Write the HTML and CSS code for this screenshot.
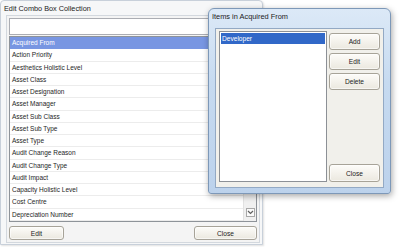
FILE: index.html
```html
<html><head>
	<meta charset="utf-8">
	<title>Edit Combo Box Collection</title>
	<link rel="stylesheet" href="styles.css">
</head>
<body>
	<div class="desktop">
		<!-- main window -->
		<div class="win main-win">
			<div class="title">Edit Combo Box Collection</div>
			<div class="client">
				<div class="textbox"></div>
				<div class="listview">
					<div class="rows">
						<div class="row selected">Acquired From</div>
						<div class="row">Action Priority</div>
						<div class="row">Aesthetics Holistic Level</div>
						<div class="row">Asset Class</div>
						<div class="row">Asset Designation</div>
						<div class="row">Asset Manager</div>
						<div class="row">Asset Sub Class</div>
						<div class="row">Asset Sub Type</div>
						<div class="row">Asset Type</div>
						<div class="row">Audit Change Reason</div>
						<div class="row">Audit Change Type</div>
						<div class="row">Audit Impact</div>
						<div class="row">Capacity Holistic Level</div>
						<div class="row">Cost Centre</div>
						<div class="row">Depreciation Number</div>
					</div>
					<div class="vscroll">
						<div class="arrow">
							<svg width="7" height="7" viewBox="0 0 7 7"><path d="M1 2 L3.5 4.5 L6 2" fill="none" stroke="#606060" stroke-width="1.2"/></svg>
						</div>
					</div>
				</div>
				<div class="actions">
					<button class="btn btn-edit">Edit</button>
					<button class="btn btn-close">Close</button>
				</div>
			</div>
		</div>

		<!-- items window -->
		<div class="win items-win">
			<div class="title">Items in Acquired From</div>
			<div class="client">
				<div class="listbox">
					<div class="item selected">Developer</div>
				</div>
				<div class="side">
					<button class="btn">Add</button>
					<button class="btn">Edit</button>
					<button class="btn">Delete</button>
					<button class="btn btn-bottom">Close</button>
				</div>
			</div>
		</div>
	</div>
</body></html>
```

FILE: styles.css
```css
* {
	margin: 0;
	padding: 0;
	box-sizing: border-box;
}

body {
	font-family: "Liberation Sans", Arial, sans-serif;
	color: #1e1e1e;
	background: #fff;
}

.desktop {
	width: 399px;
	height: 247px;
	position: relative;
	overflow: hidden;
}

.win {
	display: flex;
	flex-direction: column;
}

.title {
	flex: none;
	white-space: nowrap;
}

/* main window */
.main-win {
	width: 263px;
	height: 245px;
	border: 1px solid #c8d0da;
	border-radius: 4px 4px 0 0;
	background: #f6f7f8;
	box-shadow: 1px 1px 2px rgba(0,0,0,0.12);
}
.main-win .title {
	height: 14px;
	line-height: 15px;
	padding-left: 3px;
	font-size: 7.3px;
	color: #222;
}
.main-win .client {
	flex: 1;
	margin: 0 2px 1px 5px;
	border: 1px solid #d3d8de;
	background: #f4f4f4;
	padding: 2px 1px 0 1px;
	display: flex;
	flex-direction: column;
}

.textbox {
	height: 17px;
	margin: 0 1px;
	border: 1px solid #abadb3;
	background: #fff;
}

.listview {
	height: 186px;
	margin: 1px 1px 0 1px;
	border: 1px solid #8e9399;
	background: #fff;
	display: flex;
}
.rows {
	flex: 1;
}
.row {
	height: 12.25px;
	line-height: 12px;
	padding-left: 2px;
	font-size: 6.5px;
	border-bottom: 1px solid #ececec;
	white-space: nowrap;
}
.row.selected {
	background: #7896e2;
	color: #fff;
	border-bottom-color: #7896e2;
}

.vscroll {
	width: 13px;
	background: #f0f0f0;
	border-left: 1px solid #e2e2e2;
	display: flex;
	flex-direction: column;
	justify-content: flex-end;
	align-items: center;
	padding-bottom: 4px;
}
.arrow {
	width: 9px;
	height: 9px;
	border: 1px solid #a8a8a8;
	background: #fafafa;
	display: flex;
	align-items: center;
	justify-content: center;
}

.actions {
	display: flex;
	justify-content: space-between;
	margin-top: 4px;
	padding: 0 1px;
}

.btn {
	font-family: "Liberation Sans", Arial, sans-serif;
	font-size: 6.6px;
	color: #222;
	height: 14px;
	border: 1px solid #a7a398;
	border-radius: 3px;
	background: linear-gradient(#fdfcf9, #ebe8df);
	box-shadow: 0 0 0 1px rgba(255,255,255,0.6) inset;
}
.btn-edit {
	width: 55px;
}
.btn-close {
	width: 63px;
}

/* items window */
.items-win {
	position: absolute;
	left: 208px;
	top: 8px;
	width: 183px;
	height: 186px;
	border: 1px solid #7d98b8;
	border-radius: 6px 6px 3px 3px;
	background: linear-gradient(#dce9f7, #c6daf0 40%, #bcd2ec);
	box-shadow: 1px 2px 6px rgba(0,0,0,0.35);
}
.items-win .title {
	height: 19px;
	line-height: 16px;
	padding-left: 3px;
	font-size: 7.4px;
	color: #1a1a1a;
}
.items-win .client {
	flex: 1;
	margin: 0 6px 5px 6px;
	border: 1px solid #93a9c4;
	background: #f1f0eb;
	padding: 2px 3px 5px 3px;
	display: flex;
	gap: 2px;
}

.listbox {
	width: 108px;
	border: 1px solid #8c9096;
	background: #fff;
	padding: 1px;
}
.item {
	height: 11px;
	line-height: 11px;
	padding-left: 1px;
	font-size: 6.6px;
}
.item.selected {
	background: #3168c8;
	color: #fff;
}

.side {
	flex: 1;
	display: flex;
	flex-direction: column;
	padding-top: 2px;
}
.side .btn {
	height: 17px;
	margin-bottom: 3px;
}
.side .btn-bottom {
	margin-top: auto;
	margin-bottom: 0;
	height: 18px;
}
```
